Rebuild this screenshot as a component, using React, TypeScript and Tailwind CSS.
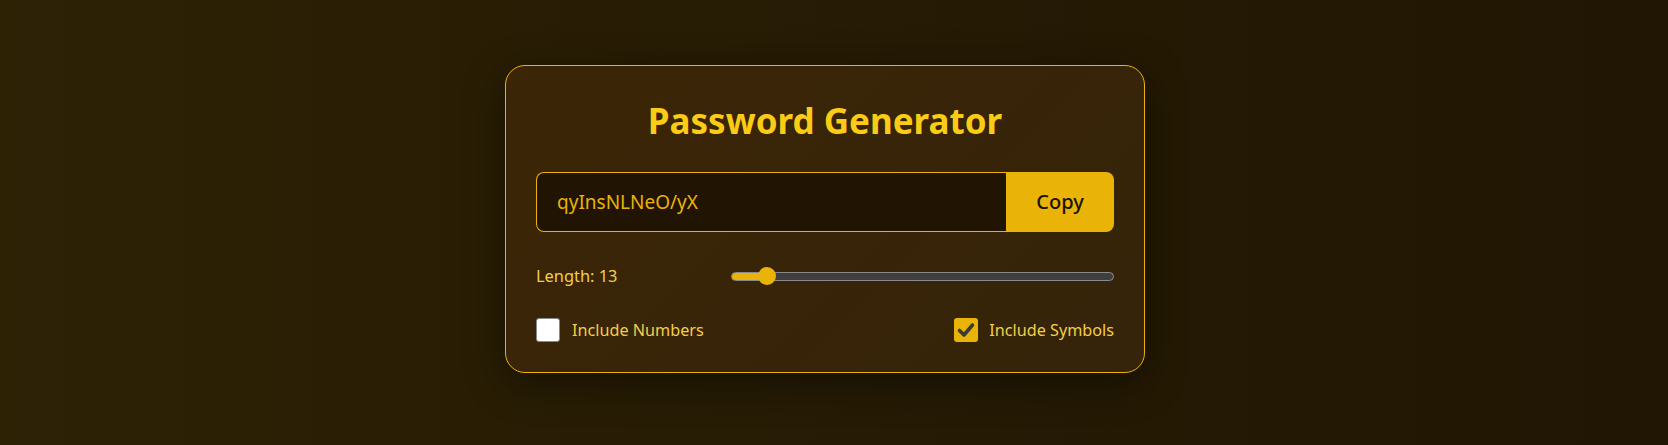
import React from "react";

export default function App() {
  return (
    <div
      className="w-full h-[445px] flex justify-center pt-[65px] pr-[18px] bg-[linear-gradient(90deg,#2d2204_0%,#251a04_60%,#201603_100%)]"
      style={{ fontFamily: '"Noto Sans", "Open Sans", sans-serif' }}
    >
      <div className="w-[640px] h-[308px] rounded-[20px] border border-[#eab308] bg-[linear-gradient(135deg,#3b2506_0%,#35240a_100%)] shadow-[0_10px_40px_rgba(0,0,0,0.45)] px-[30px] pt-[33px] flex flex-col">
        <h1 className="text-center text-[35px] leading-[44px] font-bold text-[#facc15]">
          Password Generator
        </h1>
        <div className="mt-[29px] flex h-[60px]">
          <div className="flex-1 flex items-center rounded-l-[8px] border border-r-0 border-[#eab308] bg-[#211403] pl-[20px] text-[19px] text-[#eab308]">
            qyInsNLNeO/yX
          </div>
          <button className="w-[108px] rounded-r-[8px] bg-[#eab308] text-[20px] font-medium text-[#1a1204]">
            Copy
          </button>
        </div>
        <div className="mt-[30px] flex items-center justify-between h-[28px]">
          <span className="text-[16.4px] text-[#f3cf48]">Length: 13</span>
          <div className="relative w-[383px] h-[18px] flex items-center">
            <div className="w-full h-[9px] rounded-full border border-[#8a8a8a] bg-[#3f3f3f] overflow-hidden">
              <div className="h-full w-[36px] bg-[#eab308]" />
            </div>
            <div className="absolute left-[27px] top-0 w-[18px] h-[18px] rounded-full bg-[#eab308]" />
          </div>
        </div>
        <div className="mt-[28px] flex items-center justify-between">
          <label className="flex items-center gap-[12px] text-[16.2px] text-[#f3cf48]">
            <span className="w-[24px] h-[24px] rounded-[3px] bg-white border border-[#8a8a8a]" />
            Include Numbers
          </label>
          <label className="flex items-center gap-[11px] text-[16.2px] text-[#f3cf48]">
            <span className="w-[24px] h-[24px] rounded-[3px] bg-[#eab308] flex items-center justify-center">
              <svg width="20" height="20" viewBox="0 0 20 20">
                <path d="M3.5 10.5 L8 15 L16.5 5" fill="none" stroke="#3a3a3a" strokeWidth="3.6" strokeLinecap="round" strokeLinejoin="round" />
              </svg>
            </span>
            Include Symbols
          </label>
        </div>
      </div>
    </div>
  );
}
